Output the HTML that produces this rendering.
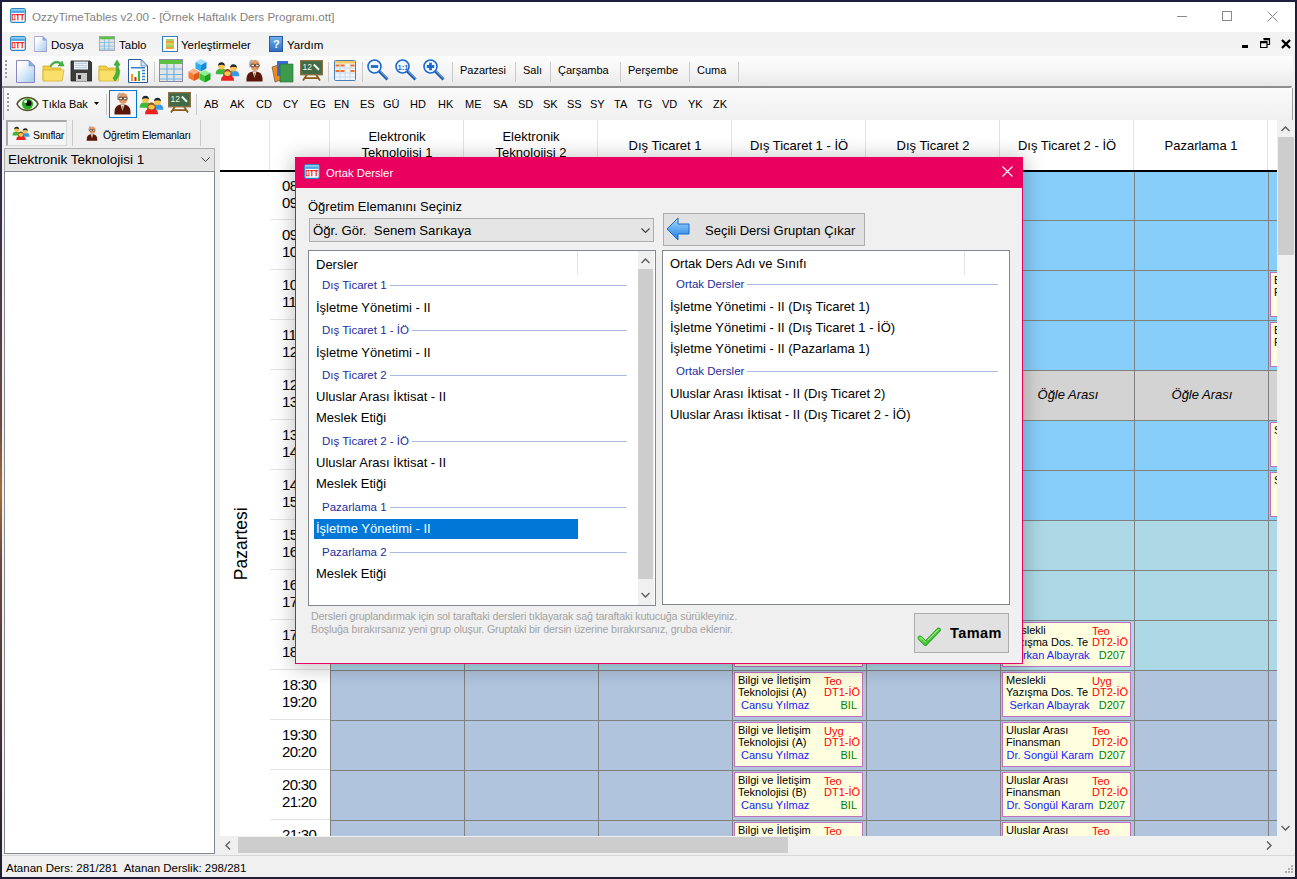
<!DOCTYPE html><html><head><meta charset="utf-8"><style>
*{margin:0;padding:0;box-sizing:border-box}
html,body{width:1297px;height:879px;overflow:hidden;background:#f0f0f0;font-family:"Liberation Sans",sans-serif;color:#000}
div,span,svg{position:absolute}
.sep{width:1px;background:#c9c9c9}
.grip{width:2px;background:repeating-linear-gradient(#9a9a9a 0 2px,transparent 2px 4px)}
.tx{white-space:nowrap;line-height:1}
</style></head><body>
<div style="left:0px;top:0px;width:1297px;height:32px;background:#fff"></div>
<svg style="position:absolute;left:10px;top:8px" width="16" height="15" viewBox="0 0 16 15"><rect x="0.7" y="0.7" width="14.6" height="13.6" rx="1.5" fill="#fff" stroke="#2a86c0" stroke-width="1.3"/><rect x="1.3" y="1.3" width="13.4" height="3.6" fill="#4aa6e0"/><rect x="1.3" y="1.3" width="13.4" height="1.3" fill="#9fd6f6"/><path d="M1.8 6h3.6v6.2H1.8z M2.8 7v4.2h1.6V7z" fill="#f02828" fill-rule="evenodd"/><path d="M5.8 6h4v1.3H8.45V12.2H7.15V7.3H5.8z M10 6h4.2v1.3h-1.4V12.2h-1.3V7.3H10z" fill="#f02828"/><path d="M2 8.6h12M2 10.4h12" stroke="#fff" stroke-width="0.35" stroke-dasharray="0.5 0.7"/></svg>
<span class="tx" style="left:32px;top:11px;font-size:11.6px;color:#828282;">OzzyTimeTables v2.00 - [Örnek Haftalık Ders Programı.ott]</span>
<div style="left:1177px;top:16px;width:10px;height:1px;background:#8a8a8a"></div>
<div style="left:1222px;top:11px;width:10px;height:10px;border:1px solid #8a8a8a"></div>
<svg style="left:1267px;top:11px" width="11" height="11"><path d="M0.5 0.5L10.5 10.5M10.5 0.5L0.5 10.5" stroke="#8a8a8a" stroke-width="1"/></svg>
<div style="left:0px;top:32px;width:1297px;height:24px;background:linear-gradient(#f1f1f1,#f4f4f4)"></div>
<svg style="position:absolute;left:10px;top:36px" width="16" height="15" viewBox="0 0 16 15"><rect x="0.7" y="0.7" width="14.6" height="13.6" rx="1.5" fill="#fff" stroke="#2a86c0" stroke-width="1.3"/><rect x="1.3" y="1.3" width="13.4" height="3.6" fill="#4aa6e0"/><rect x="1.3" y="1.3" width="13.4" height="1.3" fill="#9fd6f6"/><path d="M1.8 6h3.6v6.2H1.8z M2.8 7v4.2h1.6V7z" fill="#f02828" fill-rule="evenodd"/><path d="M5.8 6h4v1.3H8.45V12.2H7.15V7.3H5.8z M10 6h4.2v1.3h-1.4V12.2h-1.3V7.3H10z" fill="#f02828"/><path d="M2 8.6h12M2 10.4h12" stroke="#fff" stroke-width="0.35" stroke-dasharray="0.5 0.7"/></svg>
<svg style="position:absolute;left:34px;top:36px" width="13" height="16" viewBox="0 0 19 23"><defs><linearGradient id="ndg" x1="0" y1="0" x2="1" y2="1"><stop offset="0.2" stop-color="#ffffff"/><stop offset="1" stop-color="#9fcbef"/></linearGradient></defs><path d="M0.5 0.5H13L18.5 6V22.5H0.5Z" fill="url(#ndg)" stroke="#8a86c4"/><path d="M13 0.5V6H18.5Z" fill="#7ab8ea" stroke="#8a86c4" stroke-width="0.6"/></svg>
<span class="tx" style="left:51px;top:40px;font-size:11.5px;color:#000;">Dosya</span>
<svg style="position:absolute;left:99px;top:36px" width="16" height="15" viewBox="0 0 24 23"><rect x="0.5" y="0.5" width="23" height="22" fill="#e4e4e4" stroke="#8a8aa8"/><rect x="1" y="1" width="22" height="4" fill="#5cc040"/><path d="M8 5V22M15 5V22" stroke="#6ab4e4" stroke-width="1.2"/><path d="M1 10H23M1 15.5H23M1 20H23" stroke="#6ab4e4" stroke-width="1"/></svg>
<span class="tx" style="left:119px;top:40px;font-size:11.5px;color:#000;">Tablo</span>
<div style="left:162px;top:36px;width:16px;height:16px;border:1px solid #2f7fc0;background:#fff"><div style="left:3px;top:2px;width:8px;height:10px;background:repeating-linear-gradient(#9fd36a 0 2px,#f0a040 2px 4px,#d8d060 4px 6px)"></div></div>
<span class="tx" style="left:181px;top:40px;font-size:11.5px;color:#000;">Yerleştirmeler</span>
<div style="left:269px;top:36px;width:14px;height:16px;background:linear-gradient(#6fb0ef,#2f6fc0);border:1px solid #2a5a9a"><span class="tx" style="left:3px;top:2px;font-size:11px;color:#fff;font-weight:bold">?</span></div>
<span class="tx" style="left:287px;top:40px;font-size:11.5px;color:#000;">Yardım</span>
<div style="left:1242px;top:45px;width:6px;height:3px;background:#000"></div>
<svg style="left:1260px;top:38px" width="11" height="11"><path d="M3.5 0.5h6v6h-2.5M0.5 3.5h6.5v6H0.5z" fill="none" stroke="#000" stroke-width="1.2"/><path d="M3.5 0.5h6v1.8h-6z M0.5 3.5h6.5v1.8H0.5z" fill="#000"/></svg>
<svg style="left:1281px;top:39px" width="10" height="10"><path d="M1 1L9 9M9 1L1 9" stroke="#000" stroke-width="2.4"/></svg>
<div style="left:2px;top:56px;width:1291px;height:31px;background:linear-gradient(#fdfdfd,#f4f4f4 55%,#e8e8e8);border-bottom-right-radius:3px"></div>
<div style="left:2px;top:86px;width:1290px;height:2px;background:#8e8e8e;border-bottom-right-radius:2px"></div>
<div class="grip" style="left:5px;top:60px;width:2px;height:18px;"></div>
<svg style="position:absolute;left:16px;top:60px" width="19" height="23" viewBox="0 0 19 23"><defs><linearGradient id="ndg" x1="0" y1="0" x2="1" y2="1"><stop offset="0.2" stop-color="#ffffff"/><stop offset="1" stop-color="#9fcbef"/></linearGradient></defs><path d="M0.5 0.5H13L18.5 6V22.5H0.5Z" fill="url(#ndg)" stroke="#8a86c4"/><path d="M13 0.5V6H18.5Z" fill="#7ab8ea" stroke="#8a86c4" stroke-width="0.6"/></svg>
<svg style="position:absolute;left:42px;top:60px" width="23" height="22" viewBox="0 0 23 22"><path d="M1 6H8L10 8H19V20H1Z" fill="#f2d04a" stroke="#d2a820" stroke-width="0.8"/><path d="M1 10H22L20 21H1Z" fill="#f8e06a" stroke="#d8b030" stroke-width="0.8"/><path d="M8 6C10 1 16 0 19 3L20 1L22 6L16 6L18 4C15 2 11 3 9 7Z" fill="#3cb83c" stroke="#2a8a2a" stroke-width="0.5"/></svg>
<svg style="position:absolute;left:70px;top:60px" width="22" height="22" viewBox="0 0 22 22"><path d="M1 1H20L22 3V21H1Z" fill="#3c3c3c" stroke="#222" stroke-width="0.8"/><rect x="4" y="1.5" width="14" height="8" fill="#e8eef4"/><path d="M5 3.5H17M5 5.5H17M5 7.5H17" stroke="#b0c4d8" stroke-width="0.8"/><rect x="6" y="13" width="11" height="8" fill="#c8c8c8"/><rect x="8" y="15" width="3" height="4" fill="#333"/></svg>
<svg style="position:absolute;left:98px;top:60px" width="23" height="22" viewBox="0 0 23 22"><path d="M1 6H8L10 8H19V20H1Z" fill="#f2d04a" stroke="#d2a820" stroke-width="0.8"/><path d="M1 10H22L20 21H1Z" fill="#f8e06a" stroke="#d8b030" stroke-width="0.8"/><path d="M17 21C22 17 22 10 20 6L22 5L19 0L16 5L18 5.5C19 10 18 15 15 18Z" fill="#3cb83c" stroke="#2a8a2a" stroke-width="0.5"/></svg>
<svg style="position:absolute;left:128px;top:59px" width="20" height="24" viewBox="0 0 20 24"><path d="M0.5 0.5H13L19.5 7V23.5H0.5Z" fill="#fff" stroke="#2a5a9a"/><path d="M13 0.5V7H19.5Z" fill="#d8e4f0" stroke="#2a5a9a" stroke-width="0.6"/><rect x="3" y="8" width="14" height="1.5" fill="#2f7fd0"/><rect x="3" y="15" width="2" height="7" fill="#f0a020"/><rect x="6.5" y="18" width="2" height="4" fill="#e02020"/><rect x="10" y="12" width="2" height="10" fill="#30c030"/><path d="M14 11.5H17M14 14.5H17M14 17.5H17M14 20.5H17" stroke="#2f7fd0" stroke-width="1.5"/></svg>
<div class="sep" style="left:154px;top:62px;width:1px;height:20px;"></div>
<svg style="position:absolute;left:159px;top:59px" width="24" height="23" viewBox="0 0 24 23"><rect x="0.5" y="0.5" width="23" height="22" fill="#e4e4e4" stroke="#8a8aa8"/><rect x="1" y="1" width="22" height="4" fill="#5cc040"/><path d="M8 5V22M15 5V22" stroke="#6ab4e4" stroke-width="1.2"/><path d="M1 10H23M1 15.5H23M1 20H23" stroke="#6ab4e4" stroke-width="1"/></svg>
<svg style="position:absolute;left:188px;top:59px" width="23" height="24" viewBox="0 0 23 24"><path d="M7.5 3L13.0 0L18.5 3L13.0 6Z" fill="#9ee0ff"/><path d="M7.5 3L13.0 6V12.5L7.5 9.5Z" fill="#2fb0f0"/><path d="M18.5 3L13.0 6V12.5L18.5 9.5Z" fill="#1a8ad8"/><path d="M0.5 12.5L6.0 9.5L11.5 12.5L6.0 15.5Z" fill="#ffb080"/><path d="M0.5 12.5L6.0 15.5V22.0L0.5 19.0Z" fill="#f87a30"/><path d="M11.5 12.5L6.0 15.5V22.0L11.5 19.0Z" fill="#e05a18"/><path d="M11.5 14L17.0 11L22.5 14L17.0 17Z" fill="#90f090"/><path d="M11.5 14L17.0 17V23.5L11.5 20.5Z" fill="#3ac83a"/><path d="M22.5 14L17.0 17V23.5L22.5 20.5Z" fill="#1ea01e"/></svg>
<svg style="position:absolute;left:215px;top:60px" width="25" height="22" viewBox="0 0 25 21"><path d="M0.7000000000000002 13.8C0.7000000000000002 9.3 3.02 8.3 6.5 8.3C9.98 8.3 12.3 9.3 12.3 13.8Z" fill="#3cb83c"/><ellipse cx="6.5" cy="5.5" rx="3.3" ry="3.5999999999999996" fill="#fbc34a"/><path d="M3.0 5.3C3.2 0.7000000000000002 9.8 0.7000000000000002 10.0 5.3C7.49 3.8 5.51 3.8 3.0 5.3Z" fill="#18283a"/><path d="M12.7 15.8C12.7 11.3 15.02 10.3 18.5 10.3C21.98 10.3 24.3 11.3 24.3 15.8Z" fill="#3a98e8"/><ellipse cx="18.5" cy="7.5" rx="3.3" ry="3.5999999999999996" fill="#fbc34a"/><path d="M15.0 7.3C15.2 2.7 21.8 2.7 22.0 7.3C19.49 5.8 17.51 5.8 15.0 7.3Z" fill="#18283a"/><path d="M6.0 20.3C6.0 15.8 8.6 14.8 12.5 14.8C16.4 14.8 19.0 15.8 19.0 20.3Z" fill="#ea2222"/><path d="M8.2 15.8C7.699999999999999 7.199999999999999 17.3 7.199999999999999 16.8 15.8Z" fill="#9a4a20"/><ellipse cx="12.5" cy="12.0" rx="3.3" ry="3.5999999999999996" fill="#fbc34a"/><path d="M8.899999999999999 12.5C9.2 6.999999999999999 15.8 6.999999999999999 16.1 12.5C14.15 10.0 10.85 10.0 8.899999999999999 12.5Z" fill="#9a4a20"/></svg>
<svg style="position:absolute;left:246px;top:59px" width="17" height="23" viewBox="0 0 17 23"><path d="M0.5 22.5C0 15 3 12.5 8.5 12.5C14 12.5 17 15 16.5 22.5Z" fill="#5a1608"/><path d="M6.5 12.5L8.5 19L10.5 12.5Z" fill="#e8d8b0"/><path d="M8.2 14L8.5 19L8.8 14Z" fill="#333"/><ellipse cx="9" cy="6.3" rx="4.6" ry="5.6" fill="#e59a6a"/><path d="M4.2 8C3.5 4 4.5 1.5 6.5 1" fill="none" stroke="#a8a8a8" stroke-width="1.8"/><rect x="5" y="5.2" width="3.6" height="2.6" rx="0.8" fill="#f8f0e8" stroke="#4a2a1a" stroke-width="0.9"/><rect x="9.4" y="5.2" width="3.6" height="2.6" rx="0.8" fill="#f8f0e8" stroke="#4a2a1a" stroke-width="0.9"/></svg>
<svg style="position:absolute;left:271px;top:59px" width="24" height="24" viewBox="0 0 24 24"><path d="M1 8L7 6L10 21L4 23Z" fill="#f08a20" stroke="#333" stroke-width="0.5"/><path d="M6 2H17V17H6Z" fill="#3a6ad8"/><path d="M9 5H22V23H9Z" fill="#3c9a4a" stroke="#2a6a3a" stroke-width="0.6"/></svg>
<svg style="position:absolute;left:300px;top:60px" width="23" height="21" viewBox="0 0 23 21"><path d="M7 14.5L3 20.5M16 14.5L20 20.5M4.5 18.2H18.5" stroke="#8a5a18" stroke-width="1.8"/><rect x="0.7" y="0.7" width="21.6" height="14" fill="#3f6a45" stroke="#8a7040" stroke-width="1.4"/><text x="2.6" y="9.6" font-family="Liberation Sans" font-size="8.5" fill="#f4f4ec">12</text><path d="M13.8 4.5L19 9.8" stroke="#f4f4ec" stroke-width="2"/></svg>
<div class="sep" style="left:328px;top:62px;width:1px;height:20px;"></div>
<svg style="position:absolute;left:334px;top:60px" width="22" height="21" viewBox="0 0 22 21"><rect x="0.5" y="0.5" width="21" height="20" fill="#f0f6fc" stroke="#4a80b0" rx="1"/><rect x="1" y="1" width="20" height="2.5" fill="#f8c860"/><path d="M6 3V20M11 3V20M16 3V20M1 8H21M1 13H21M1 17H21" stroke="#c0d4e8" stroke-width="0.8"/><path d="M1.5 5.5H5.5M6.5 5.5H10.5M16.5 5.5H20.5M1.5 11H5.5M6.5 11H10.5M16.5 11H20.5" stroke="#f07020" stroke-width="2.2"/></svg>
<div class="sep" style="left:362px;top:62px;width:1px;height:20px;"></div>
<svg style="position:absolute;left:367px;top:59px" width="23" height="22" viewBox="0 0 23 22"><path d="M12 12L20.5 20.5" stroke="#1a5ab0" stroke-width="3"/><path d="M12.5 11.8L20.8 20" stroke="#8ac0f0" stroke-width="0.8"/><circle cx="7.5" cy="7.5" r="6.5" fill="#f4f8ff" stroke="#1a6ad0" stroke-width="1.6"/><path d="M3.8 7.5H11.2" stroke="#1a6ad0" stroke-width="2.8"/></svg>
<svg style="position:absolute;left:395px;top:59px" width="23" height="22" viewBox="0 0 23 22"><path d="M12 12L20.5 20.5" stroke="#1a5ab0" stroke-width="3"/><path d="M12.5 11.8L20.8 20" stroke="#8ac0f0" stroke-width="0.8"/><circle cx="7.5" cy="7.5" r="6.5" fill="#f4f8ff" stroke="#1a6ad0" stroke-width="1.6"/><text x="2.6" y="10.6" font-family="Liberation Sans" font-size="7.5" font-weight="bold" fill="#1a6ad0">1:1</text></svg>
<svg style="position:absolute;left:423px;top:59px" width="23" height="22" viewBox="0 0 23 22"><path d="M12 12L20.5 20.5" stroke="#1a5ab0" stroke-width="3"/><path d="M12.5 11.8L20.8 20" stroke="#8ac0f0" stroke-width="0.8"/><circle cx="7.5" cy="7.5" r="6.5" fill="#f4f8ff" stroke="#1a6ad0" stroke-width="1.6"/><path d="M3.8 7.5H11.2M7.5 3.8V11.2" stroke="#1a6ad0" stroke-width="2.8"/></svg>
<div class="sep" style="left:452px;top:62px;width:1px;height:20px;"></div>
<span class="tx" style="left:460px;top:65px;font-size:11px;color:#000;">Pazartesi</span>
<span class="tx" style="left:523px;top:65px;font-size:11px;color:#000;">Salı</span>
<span class="tx" style="left:558px;top:65px;font-size:11px;color:#000;">Çarşamba</span>
<span class="tx" style="left:628px;top:65px;font-size:11px;color:#000;">Perşembe</span>
<span class="tx" style="left:697px;top:65px;font-size:11px;color:#000;">Cuma</span>
<div class="sep" style="left:515px;top:62px;width:1px;height:20px;"></div>
<div class="sep" style="left:550px;top:62px;width:1px;height:20px;"></div>
<div class="sep" style="left:620px;top:62px;width:1px;height:20px;"></div>
<div class="sep" style="left:689px;top:62px;width:1px;height:20px;"></div>
<div class="sep" style="left:738px;top:62px;width:1px;height:20px;"></div>
<div style="left:3px;top:88px;width:1290px;height:32px;background:linear-gradient(#fbfbfb,#f0f0f0);border-left:1px solid #a0a0a0;border-right:1px solid #a0a0a0"></div>
<div class="grip" style="left:7px;top:93px;width:2px;height:18px;"></div>
<svg style="position:absolute;left:16px;top:96px" width="23" height="16" viewBox="0 0 23 16"><path d="M1 8C5 -0.5 18 -0.5 22 8C18 16.5 5 16.5 1 8Z" fill="#fff" stroke="#55552a" stroke-width="1.6"/><circle cx="11.5" cy="8" r="5.6" fill="#22b022"/><circle cx="12.6" cy="7.2" r="2.9" fill="#101010"/><circle cx="9.6" cy="5.6" r="1.5" fill="#f0fff0"/></svg>
<span class="tx" style="left:42px;top:99px;font-size:11px;color:#000;">Tıkla Bak</span>
<svg style="left:94px;top:102px" width="5" height="4"><path d="M0 0H5L2.5 3Z" fill="#000"/></svg>
<div class="sep" style="left:106px;top:94px;width:1px;height:21px;"></div>
<div style="left:109px;top:90px;width:28px;height:28px;border:1px solid #0078d7;background:#f6f6f6"></div>
<svg style="position:absolute;left:114px;top:92px" width="17" height="23" viewBox="0 0 17 23"><path d="M0.5 22.5C0 15 3 12.5 8.5 12.5C14 12.5 17 15 16.5 22.5Z" fill="#5a1608"/><path d="M6.5 12.5L8.5 19L10.5 12.5Z" fill="#e8d8b0"/><path d="M8.2 14L8.5 19L8.8 14Z" fill="#333"/><ellipse cx="9" cy="6.3" rx="4.6" ry="5.6" fill="#e59a6a"/><path d="M4.2 8C3.5 4 4.5 1.5 6.5 1" fill="none" stroke="#a8a8a8" stroke-width="1.8"/><rect x="5" y="5.2" width="3.6" height="2.6" rx="0.8" fill="#f8f0e8" stroke="#4a2a1a" stroke-width="0.9"/><rect x="9.4" y="5.2" width="3.6" height="2.6" rx="0.8" fill="#f8f0e8" stroke="#4a2a1a" stroke-width="0.9"/></svg>
<svg style="position:absolute;left:139px;top:94px" width="25" height="21" viewBox="0 0 25 21"><path d="M0.7000000000000002 13.8C0.7000000000000002 9.3 3.02 8.3 6.5 8.3C9.98 8.3 12.3 9.3 12.3 13.8Z" fill="#3cb83c"/><ellipse cx="6.5" cy="5.5" rx="3.3" ry="3.5999999999999996" fill="#fbc34a"/><path d="M3.0 5.3C3.2 0.7000000000000002 9.8 0.7000000000000002 10.0 5.3C7.49 3.8 5.51 3.8 3.0 5.3Z" fill="#18283a"/><path d="M12.7 15.8C12.7 11.3 15.02 10.3 18.5 10.3C21.98 10.3 24.3 11.3 24.3 15.8Z" fill="#3a98e8"/><ellipse cx="18.5" cy="7.5" rx="3.3" ry="3.5999999999999996" fill="#fbc34a"/><path d="M15.0 7.3C15.2 2.7 21.8 2.7 22.0 7.3C19.49 5.8 17.51 5.8 15.0 7.3Z" fill="#18283a"/><path d="M6.0 20.3C6.0 15.8 8.6 14.8 12.5 14.8C16.4 14.8 19.0 15.8 19.0 20.3Z" fill="#ea2222"/><path d="M8.2 15.8C7.699999999999999 7.199999999999999 17.3 7.199999999999999 16.8 15.8Z" fill="#9a4a20"/><ellipse cx="12.5" cy="12.0" rx="3.3" ry="3.5999999999999996" fill="#fbc34a"/><path d="M8.899999999999999 12.5C9.2 6.999999999999999 15.8 6.999999999999999 16.1 12.5C14.15 10.0 10.85 10.0 8.899999999999999 12.5Z" fill="#9a4a20"/></svg>
<svg style="position:absolute;left:168px;top:92px" width="23" height="21" viewBox="0 0 23 21"><path d="M7 14.5L3 20.5M16 14.5L20 20.5M4.5 18.2H18.5" stroke="#8a5a18" stroke-width="1.8"/><rect x="0.7" y="0.7" width="21.6" height="14" fill="#3f6a45" stroke="#8a7040" stroke-width="1.4"/><text x="2.6" y="9.6" font-family="Liberation Sans" font-size="8.5" fill="#f4f4ec">12</text><path d="M13.8 4.5L19 9.8" stroke="#f4f4ec" stroke-width="2"/></svg>
<div class="sep" style="left:196px;top:94px;width:1px;height:21px;"></div>
<span class="tx" style="left:204px;top:99px;font-size:11px;color:#000;">AB</span>
<span class="tx" style="left:230px;top:99px;font-size:11px;color:#000;">AK</span>
<span class="tx" style="left:256px;top:99px;font-size:11px;color:#000;">CD</span>
<span class="tx" style="left:283px;top:99px;font-size:11px;color:#000;">CY</span>
<span class="tx" style="left:310px;top:99px;font-size:11px;color:#000;">EG</span>
<span class="tx" style="left:334px;top:99px;font-size:11px;color:#000;">EN</span>
<span class="tx" style="left:360px;top:99px;font-size:11px;color:#000;">ES</span>
<span class="tx" style="left:383px;top:99px;font-size:11px;color:#000;">GÜ</span>
<span class="tx" style="left:410px;top:99px;font-size:11px;color:#000;">HD</span>
<span class="tx" style="left:438px;top:99px;font-size:11px;color:#000;">HK</span>
<span class="tx" style="left:465px;top:99px;font-size:11px;color:#000;">ME</span>
<span class="tx" style="left:493px;top:99px;font-size:11px;color:#000;">SA</span>
<span class="tx" style="left:518px;top:99px;font-size:11px;color:#000;">SD</span>
<span class="tx" style="left:543px;top:99px;font-size:11px;color:#000;">SK</span>
<span class="tx" style="left:567px;top:99px;font-size:11px;color:#000;">SS</span>
<span class="tx" style="left:590px;top:99px;font-size:11px;color:#000;">SY</span>
<span class="tx" style="left:614px;top:99px;font-size:11px;color:#000;">TA</span>
<span class="tx" style="left:637px;top:99px;font-size:11px;color:#000;">TG</span>
<span class="tx" style="left:662px;top:99px;font-size:11px;color:#000;">VD</span>
<span class="tx" style="left:688px;top:99px;font-size:11px;color:#000;">YK</span>
<span class="tx" style="left:713px;top:99px;font-size:11px;color:#000;">ZK</span>
<div style="left:6px;top:120px;width:61px;height:26px;border-style:solid;border-width:2px 1px 1px 2px;border-color:#a8a8a8 #d8d8d8 #d8d8d8 #a8a8a8;background:#f5f5f5"></div>
<svg style="position:absolute;left:12px;top:125px" width="18" height="16" viewBox="0 0 25 21"><path d="M0.7000000000000002 13.8C0.7000000000000002 9.3 3.02 8.3 6.5 8.3C9.98 8.3 12.3 9.3 12.3 13.8Z" fill="#3cb83c"/><ellipse cx="6.5" cy="5.5" rx="3.3" ry="3.5999999999999996" fill="#fbc34a"/><path d="M3.0 5.3C3.2 0.7000000000000002 9.8 0.7000000000000002 10.0 5.3C7.49 3.8 5.51 3.8 3.0 5.3Z" fill="#18283a"/><path d="M12.7 15.8C12.7 11.3 15.02 10.3 18.5 10.3C21.98 10.3 24.3 11.3 24.3 15.8Z" fill="#3a98e8"/><ellipse cx="18.5" cy="7.5" rx="3.3" ry="3.5999999999999996" fill="#fbc34a"/><path d="M15.0 7.3C15.2 2.7 21.8 2.7 22.0 7.3C19.49 5.8 17.51 5.8 15.0 7.3Z" fill="#18283a"/><path d="M6.0 20.3C6.0 15.8 8.6 14.8 12.5 14.8C16.4 14.8 19.0 15.8 19.0 20.3Z" fill="#ea2222"/><path d="M8.2 15.8C7.699999999999999 7.199999999999999 17.3 7.199999999999999 16.8 15.8Z" fill="#9a4a20"/><ellipse cx="12.5" cy="12.0" rx="3.3" ry="3.5999999999999996" fill="#fbc34a"/><path d="M8.899999999999999 12.5C9.2 6.999999999999999 15.8 6.999999999999999 16.1 12.5C14.15 10.0 10.85 10.0 8.899999999999999 12.5Z" fill="#9a4a20"/></svg>
<span class="tx" style="left:33px;top:130px;font-size:10.5px;color:#000;letter-spacing:-0.3px">Sınıflar</span>
<div class="sep" style="left:72px;top:120px;width:1px;height:26px;"></div>
<svg style="position:absolute;left:86px;top:126px" width="12" height="15" viewBox="0 0 17 23"><path d="M0.5 22.5C0 15 3 12.5 8.5 12.5C14 12.5 17 15 16.5 22.5Z" fill="#5a1608"/><path d="M6.5 12.5L8.5 19L10.5 12.5Z" fill="#e8d8b0"/><path d="M8.2 14L8.5 19L8.8 14Z" fill="#333"/><ellipse cx="9" cy="6.3" rx="4.6" ry="5.6" fill="#e59a6a"/><path d="M4.2 8C3.5 4 4.5 1.5 6.5 1" fill="none" stroke="#a8a8a8" stroke-width="1.8"/><rect x="5" y="5.2" width="3.6" height="2.6" rx="0.8" fill="#f8f0e8" stroke="#4a2a1a" stroke-width="0.9"/><rect x="9.4" y="5.2" width="3.6" height="2.6" rx="0.8" fill="#f8f0e8" stroke="#4a2a1a" stroke-width="0.9"/></svg>
<span class="tx" style="left:103px;top:130px;font-size:10.5px;color:#000;letter-spacing:-0.15px">Öğretim Elemanları</span>
<div class="sep" style="left:200px;top:120px;width:1px;height:26px;"></div>
<div style="left:4px;top:148px;width:211px;height:24px;background:#e5e5e5;border:1px solid #adadad"></div>
<span class="tx" style="left:8px;top:153px;font-size:13.5px;color:#000;">Elektronik Teknolojisi 1</span>
<svg style="left:201px;top:157px" width="10" height="6"><path d="M0.5 0.5L4.5 4.5L8.5 0.5" fill="none" stroke="#404040" stroke-width="1"/></svg>
<div style="left:4px;top:171px;width:211px;height:683px;background:#fff;border:1px solid #828790"></div>
<div style="left:220px;top:120px;width:1057px;height:716px;background:#fff;overflow:hidden"></div>
<div style="left:0;top:0;width:1277px;height:837px;overflow:hidden">
<div style="left:269px;top:120px;width:1px;height:50px;background:#e3e3e3"></div>
<div style="left:463px;top:120px;width:1px;height:50px;background:#e3e3e3"></div>
<div style="left:597px;top:120px;width:1px;height:50px;background:#e3e3e3"></div>
<div style="left:731px;top:120px;width:1px;height:50px;background:#e3e3e3"></div>
<div style="left:865px;top:120px;width:1px;height:50px;background:#e3e3e3"></div>
<div style="left:999px;top:120px;width:1px;height:50px;background:#e3e3e3"></div>
<div style="left:1133px;top:120px;width:1px;height:50px;background:#e3e3e3"></div>
<div style="left:1267px;top:120px;width:1px;height:50px;background:#e3e3e3"></div>
<div style="left:329px;top:120px;width:1px;height:50px;background:#e3e3e3"></div>
<span class="tx" style="left:197px;width:400px;text-align:center;top:130px;font-size:13px;color:#000;">Elektronik</span>
<span class="tx" style="left:197px;width:400px;text-align:center;top:146px;font-size:13px;color:#000;">Teknolojisi 1</span>
<span class="tx" style="left:331px;width:400px;text-align:center;top:130px;font-size:13px;color:#000;">Elektronik</span>
<span class="tx" style="left:331px;width:400px;text-align:center;top:146px;font-size:13px;color:#000;">Teknolojisi 2</span>
<span class="tx" style="left:465px;width:400px;text-align:center;top:139px;font-size:13px;color:#000;">Dış Ticaret 1</span>
<span class="tx" style="left:599px;width:400px;text-align:center;top:139px;font-size:13px;color:#000;">Dış Ticaret 1 - İÖ</span>
<span class="tx" style="left:733px;width:400px;text-align:center;top:139px;font-size:13px;color:#000;">Dış Ticaret 2</span>
<span class="tx" style="left:867px;width:400px;text-align:center;top:139px;font-size:13px;color:#000;">Dış Ticaret 2 - İÖ</span>
<span class="tx" style="left:1001px;width:400px;text-align:center;top:139px;font-size:13px;color:#000;">Pazarlama 1</span>
<span class="tx" style="left:1135px;width:400px;text-align:center;top:139px;font-size:13px;color:#000;"></span>
<div style="left:220px;top:170px;width:1057px;height:2px;background:#000"></div>
<div style="left:330px;top:172px;width:947px;height:48px;background:#87cefa"></div>
<span class="tx" style="left:282px;top:178px;font-size:15px;color:#000;letter-spacing:-0.7px">08:30</span>
<span class="tx" style="left:282px;top:195px;font-size:15px;color:#000;letter-spacing:-0.7px">09:20</span>
<div style="left:330px;top:220px;width:947px;height:50px;background:#87cefa"></div>
<div style="left:270px;top:219px;width:60px;height:1px;background:#e3e3e3"></div>
<div style="left:330px;top:220px;width:947px;height:1px;background:#808080"></div>
<span class="tx" style="left:282px;top:227px;font-size:15px;color:#000;letter-spacing:-0.7px">09:30</span>
<span class="tx" style="left:282px;top:244px;font-size:15px;color:#000;letter-spacing:-0.7px">10:20</span>
<div style="left:330px;top:270px;width:947px;height:50px;background:#87cefa"></div>
<div style="left:270px;top:269px;width:60px;height:1px;background:#e3e3e3"></div>
<div style="left:330px;top:270px;width:947px;height:1px;background:#808080"></div>
<span class="tx" style="left:282px;top:277px;font-size:15px;color:#000;letter-spacing:-0.7px">10:30</span>
<span class="tx" style="left:282px;top:294px;font-size:15px;color:#000;letter-spacing:-0.7px">11:20</span>
<div style="left:330px;top:320px;width:947px;height:50px;background:#87cefa"></div>
<div style="left:270px;top:319px;width:60px;height:1px;background:#e3e3e3"></div>
<div style="left:330px;top:320px;width:947px;height:1px;background:#808080"></div>
<span class="tx" style="left:282px;top:327px;font-size:15px;color:#000;letter-spacing:-0.7px">11:30</span>
<span class="tx" style="left:282px;top:344px;font-size:15px;color:#000;letter-spacing:-0.7px">12:20</span>
<div style="left:330px;top:370px;width:947px;height:50px;background:#d3d3d3"></div>
<div style="left:270px;top:369px;width:60px;height:1px;background:#e3e3e3"></div>
<div style="left:330px;top:370px;width:947px;height:1px;background:#808080"></div>
<span class="tx" style="left:282px;top:377px;font-size:15px;color:#000;letter-spacing:-0.7px">12:30</span>
<span class="tx" style="left:282px;top:394px;font-size:15px;color:#000;letter-spacing:-0.7px">13:20</span>
<div style="left:330px;top:420px;width:947px;height:50px;background:#87cefa"></div>
<div style="left:270px;top:419px;width:60px;height:1px;background:#e3e3e3"></div>
<div style="left:330px;top:420px;width:947px;height:1px;background:#808080"></div>
<span class="tx" style="left:282px;top:427px;font-size:15px;color:#000;letter-spacing:-0.7px">13:30</span>
<span class="tx" style="left:282px;top:444px;font-size:15px;color:#000;letter-spacing:-0.7px">14:20</span>
<div style="left:330px;top:470px;width:947px;height:50px;background:#87cefa"></div>
<div style="left:270px;top:469px;width:60px;height:1px;background:#e3e3e3"></div>
<div style="left:330px;top:470px;width:947px;height:1px;background:#808080"></div>
<span class="tx" style="left:282px;top:477px;font-size:15px;color:#000;letter-spacing:-0.7px">14:30</span>
<span class="tx" style="left:282px;top:494px;font-size:15px;color:#000;letter-spacing:-0.7px">15:20</span>
<div style="left:330px;top:520px;width:947px;height:50px;background:#add8e6"></div>
<div style="left:270px;top:519px;width:60px;height:1px;background:#e3e3e3"></div>
<div style="left:330px;top:520px;width:947px;height:1px;background:#808080"></div>
<span class="tx" style="left:282px;top:527px;font-size:15px;color:#000;letter-spacing:-0.7px">15:30</span>
<span class="tx" style="left:282px;top:544px;font-size:15px;color:#000;letter-spacing:-0.7px">16:20</span>
<div style="left:330px;top:570px;width:947px;height:50px;background:#add8e6"></div>
<div style="left:270px;top:569px;width:60px;height:1px;background:#e3e3e3"></div>
<div style="left:330px;top:570px;width:947px;height:1px;background:#808080"></div>
<span class="tx" style="left:282px;top:577px;font-size:15px;color:#000;letter-spacing:-0.7px">16:30</span>
<span class="tx" style="left:282px;top:594px;font-size:15px;color:#000;letter-spacing:-0.7px">17:20</span>
<div style="left:330px;top:620px;width:947px;height:50px;background:#add8e6"></div>
<div style="left:270px;top:619px;width:60px;height:1px;background:#e3e3e3"></div>
<div style="left:330px;top:620px;width:947px;height:1px;background:#808080"></div>
<span class="tx" style="left:282px;top:627px;font-size:15px;color:#000;letter-spacing:-0.7px">17:30</span>
<span class="tx" style="left:282px;top:644px;font-size:15px;color:#000;letter-spacing:-0.7px">18:20</span>
<div style="left:330px;top:670px;width:947px;height:50px;background:#b0c4de"></div>
<div style="left:270px;top:669px;width:60px;height:1px;background:#e3e3e3"></div>
<div style="left:330px;top:670px;width:947px;height:1px;background:#808080"></div>
<span class="tx" style="left:282px;top:677px;font-size:15px;color:#000;letter-spacing:-0.7px">18:30</span>
<span class="tx" style="left:282px;top:694px;font-size:15px;color:#000;letter-spacing:-0.7px">19:20</span>
<div style="left:330px;top:720px;width:947px;height:50px;background:#b0c4de"></div>
<div style="left:270px;top:719px;width:60px;height:1px;background:#e3e3e3"></div>
<div style="left:330px;top:720px;width:947px;height:1px;background:#808080"></div>
<span class="tx" style="left:282px;top:727px;font-size:15px;color:#000;letter-spacing:-0.7px">19:30</span>
<span class="tx" style="left:282px;top:744px;font-size:15px;color:#000;letter-spacing:-0.7px">20:20</span>
<div style="left:330px;top:770px;width:947px;height:50px;background:#b0c4de"></div>
<div style="left:270px;top:769px;width:60px;height:1px;background:#e3e3e3"></div>
<div style="left:330px;top:770px;width:947px;height:1px;background:#808080"></div>
<span class="tx" style="left:282px;top:777px;font-size:15px;color:#000;letter-spacing:-0.7px">20:30</span>
<span class="tx" style="left:282px;top:794px;font-size:15px;color:#000;letter-spacing:-0.7px">21:20</span>
<div style="left:330px;top:820px;width:947px;height:16px;background:#b0c4de"></div>
<div style="left:270px;top:819px;width:60px;height:1px;background:#e3e3e3"></div>
<div style="left:330px;top:820px;width:947px;height:1px;background:#808080"></div>
<span class="tx" style="left:282px;top:827px;font-size:15px;color:#000;letter-spacing:-0.7px">21:30</span>
<span class="tx" style="left:282px;top:844px;font-size:15px;color:#000;letter-spacing:-0.7px">22:20</span>
<div style="left:330px;top:172px;width:1px;height:664px;background:#808080"></div>
<div style="left:464px;top:172px;width:1px;height:664px;background:#808080"></div>
<div style="left:598px;top:172px;width:1px;height:664px;background:#808080"></div>
<div style="left:732px;top:172px;width:1px;height:664px;background:#808080"></div>
<div style="left:866px;top:172px;width:1px;height:664px;background:#808080"></div>
<div style="left:1000px;top:172px;width:1px;height:664px;background:#808080"></div>
<div style="left:1134px;top:172px;width:1px;height:664px;background:#808080"></div>
<div style="left:1268px;top:172px;width:1px;height:664px;background:#808080"></div>
<span class="tx" style="left:198px;width:400px;text-align:center;top:388px;font-size:13px;color:#000;font-style:italic">Öğle Arası</span>
<span class="tx" style="left:332px;width:400px;text-align:center;top:388px;font-size:13px;color:#000;font-style:italic">Öğle Arası</span>
<span class="tx" style="left:466px;width:400px;text-align:center;top:388px;font-size:13px;color:#000;font-style:italic">Öğle Arası</span>
<span class="tx" style="left:600px;width:400px;text-align:center;top:388px;font-size:13px;color:#000;font-style:italic">Öğle Arası</span>
<span class="tx" style="left:734px;width:400px;text-align:center;top:388px;font-size:13px;color:#000;font-style:italic">Öğle Arası</span>
<span class="tx" style="left:868px;width:400px;text-align:center;top:388px;font-size:13px;color:#000;font-style:italic">Öğle Arası</span>
<span class="tx" style="left:1002px;width:400px;text-align:center;top:388px;font-size:13px;color:#000;font-style:italic">Öğle Arası</span>
<span class="tx" style="left:1136px;width:400px;text-align:center;top:388px;font-size:13px;color:#000;font-style:italic">Öğle Arası</span>
<span class="tx" style="left:192px;top:535px;width:100px;text-align:center;font-size:17.5px;transform:rotate(-90deg)">Pazartesi</span>
<div style="left:734px;top:622px;width:129px;height:45px;background:#ffffe0;border:1px solid #c070c0;overflow:hidden"><span class="tx" style="left:3px;top:2px;font-size:11px">Bilgi ve İletişim</span><span class="tx" style="left:3px;top:14px;font-size:11px">Teknolojisi (A)</span><span class="tx" style="left:6px;top:27px;font-size:11px;color:#2020ff">Cansu Yılmaz</span><span class="tx" style="left:89px;top:3px;font-size:11px;color:#ff0000">Teo</span><span class="tx" style="left:89px;top:14px;font-size:11px;color:#ff0000">DT1-İÖ</span><span class="tx" style="right:5px;top:27px;font-size:11px;color:#008000">BIL</span></div>
<div style="left:734px;top:672px;width:129px;height:45px;background:#ffffe0;border:1px solid #c070c0;overflow:hidden"><span class="tx" style="left:3px;top:2px;font-size:11px">Bilgi ve İletişim</span><span class="tx" style="left:3px;top:14px;font-size:11px">Teknolojisi (A)</span><span class="tx" style="left:6px;top:27px;font-size:11px;color:#2020ff">Cansu Yılmaz</span><span class="tx" style="left:89px;top:3px;font-size:11px;color:#ff0000">Teo</span><span class="tx" style="left:89px;top:14px;font-size:11px;color:#ff0000">DT1-İÖ</span><span class="tx" style="right:5px;top:27px;font-size:11px;color:#008000">BIL</span></div>
<div style="left:734px;top:722px;width:129px;height:45px;background:#ffffe0;border:1px solid #c070c0;overflow:hidden"><span class="tx" style="left:3px;top:2px;font-size:11px">Bilgi ve İletişim</span><span class="tx" style="left:3px;top:14px;font-size:11px">Teknolojisi (A)</span><span class="tx" style="left:6px;top:27px;font-size:11px;color:#2020ff">Cansu Yılmaz</span><span class="tx" style="left:89px;top:3px;font-size:11px;color:#ff0000">Uyg</span><span class="tx" style="left:89px;top:14px;font-size:11px;color:#ff0000">DT1-İÖ</span><span class="tx" style="right:5px;top:27px;font-size:11px;color:#008000">BIL</span></div>
<div style="left:734px;top:772px;width:129px;height:45px;background:#ffffe0;border:1px solid #c070c0;overflow:hidden"><span class="tx" style="left:3px;top:2px;font-size:11px">Bilgi ve İletişim</span><span class="tx" style="left:3px;top:14px;font-size:11px">Teknolojisi (B)</span><span class="tx" style="left:6px;top:27px;font-size:11px;color:#2020ff">Cansu Yılmaz</span><span class="tx" style="left:89px;top:3px;font-size:11px;color:#ff0000">Teo</span><span class="tx" style="left:89px;top:14px;font-size:11px;color:#ff0000">DT1-İÖ</span><span class="tx" style="right:5px;top:27px;font-size:11px;color:#008000">BIL</span></div>
<div style="left:734px;top:822px;width:129px;height:45px;background:#ffffe0;border:1px solid #c070c0;overflow:hidden"><span class="tx" style="left:3px;top:2px;font-size:11px">Bilgi ve İletişim</span><span class="tx" style="left:3px;top:14px;font-size:11px">Teknolojisi (B)</span><span class="tx" style="left:6px;top:27px;font-size:11px;color:#2020ff">Cansu Yılmaz</span><span class="tx" style="left:89px;top:3px;font-size:11px;color:#ff0000">Teo</span><span class="tx" style="left:89px;top:14px;font-size:11px;color:#ff0000">DT1-İÖ</span><span class="tx" style="right:5px;top:27px;font-size:11px;color:#008000">BIL</span></div>
<div style="left:1002px;top:622px;width:129px;height:45px;background:#ffffe0;border:1px solid #c070c0;overflow:hidden"><span class="tx" style="left:3px;top:2px;font-size:11px">Meslekli</span><span class="tx" style="left:3px;top:14px;font-size:11px">Yazışma Dos. Te</span><span class="tx" style="left:6.5px;top:27px;font-size:11px;color:#2020ff">Serkan Albayrak</span><span class="tx" style="left:89px;top:3px;font-size:11px;color:#ff0000">Teo</span><span class="tx" style="left:89px;top:14px;font-size:11px;color:#ff0000">DT2-İÖ</span><span class="tx" style="right:5px;top:27px;font-size:11px;color:#008000">D207</span></div>
<div style="left:1002px;top:672px;width:129px;height:45px;background:#ffffe0;border:1px solid #c070c0;overflow:hidden"><span class="tx" style="left:3px;top:2px;font-size:11px">Meslekli</span><span class="tx" style="left:3px;top:14px;font-size:11px">Yazışma Dos. Te</span><span class="tx" style="left:6.5px;top:27px;font-size:11px;color:#2020ff">Serkan Albayrak</span><span class="tx" style="left:89px;top:3px;font-size:11px;color:#ff0000">Uyg</span><span class="tx" style="left:89px;top:14px;font-size:11px;color:#ff0000">DT2-İÖ</span><span class="tx" style="right:5px;top:27px;font-size:11px;color:#008000">D207</span></div>
<div style="left:1002px;top:722px;width:129px;height:45px;background:#ffffe0;border:1px solid #c070c0;overflow:hidden"><span class="tx" style="left:3px;top:2px;font-size:11px">Uluslar Arası</span><span class="tx" style="left:3px;top:14px;font-size:11px">Finansman</span><span class="tx" style="left:3.5px;top:27px;font-size:11px;color:#2020ff">Dr. Songül Karam</span><span class="tx" style="left:89px;top:3px;font-size:11px;color:#ff0000">Teo</span><span class="tx" style="left:89px;top:14px;font-size:11px;color:#ff0000">DT2-İÖ</span><span class="tx" style="right:5px;top:27px;font-size:11px;color:#008000">D207</span></div>
<div style="left:1002px;top:772px;width:129px;height:45px;background:#ffffe0;border:1px solid #c070c0;overflow:hidden"><span class="tx" style="left:3px;top:2px;font-size:11px">Uluslar Arası</span><span class="tx" style="left:3px;top:14px;font-size:11px">Finansman</span><span class="tx" style="left:3.5px;top:27px;font-size:11px;color:#2020ff">Dr. Songül Karam</span><span class="tx" style="left:89px;top:3px;font-size:11px;color:#ff0000">Teo</span><span class="tx" style="left:89px;top:14px;font-size:11px;color:#ff0000">DT2-İÖ</span><span class="tx" style="right:5px;top:27px;font-size:11px;color:#008000">D207</span></div>
<div style="left:1002px;top:822px;width:129px;height:45px;background:#ffffe0;border:1px solid #c070c0;overflow:hidden"><span class="tx" style="left:3px;top:2px;font-size:11px">Uluslar Arası</span><span class="tx" style="left:3px;top:14px;font-size:11px">Finansman</span><span class="tx" style="left:3.5px;top:27px;font-size:11px;color:#2020ff">Dr. Songül Karam</span><span class="tx" style="left:89px;top:3px;font-size:11px;color:#ff0000">Teo</span><span class="tx" style="left:89px;top:14px;font-size:11px;color:#ff0000">DT2-İÖ</span><span class="tx" style="right:5px;top:27px;font-size:11px;color:#008000">D207</span></div>
<div style="left:1270px;top:272px;width:129px;height:45px;background:#ffffe0;border:1px solid #c070c0;overflow:hidden"><span class="tx" style="left:3px;top:2px;font-size:11px">Bilgi</span><span class="tx" style="left:3px;top:14px;font-size:11px">Finans</span><span class="tx" style="left:6px;top:27px;font-size:11px;color:#2020ff"><span style='position:static;color:#e080e0'>·</span></span><span class="tx" style="left:89px;top:3px;font-size:11px;color:#ff0000"></span><span class="tx" style="left:89px;top:14px;font-size:11px;color:#ff0000"></span><span class="tx" style="right:5px;top:27px;font-size:11px;color:#008000"></span></div>
<div style="left:1270px;top:322px;width:129px;height:45px;background:#ffffe0;border:1px solid #c070c0;overflow:hidden"><span class="tx" style="left:3px;top:2px;font-size:11px">Bilgi</span><span class="tx" style="left:3px;top:14px;font-size:11px">Finans</span><span class="tx" style="left:6px;top:27px;font-size:11px;color:#2020ff"><span style='position:static;color:#e080e0'>·</span></span><span class="tx" style="left:89px;top:3px;font-size:11px;color:#ff0000"></span><span class="tx" style="left:89px;top:14px;font-size:11px;color:#ff0000"></span><span class="tx" style="right:5px;top:27px;font-size:11px;color:#008000"></span></div>
<div style="left:1270px;top:422px;width:129px;height:45px;background:#ffffe0;border:1px solid #c070c0;overflow:hidden"><span class="tx" style="left:3px;top:2px;font-size:11px">Satış</span><span class="tx" style="left:3px;top:14px;font-size:11px"></span><span class="tx" style="left:6px;top:27px;font-size:11px;color:#2020ff">-</span><span class="tx" style="left:89px;top:3px;font-size:11px;color:#ff0000"></span><span class="tx" style="left:89px;top:14px;font-size:11px;color:#ff0000"></span><span class="tx" style="right:5px;top:27px;font-size:11px;color:#008000"></span></div>
<div style="left:1270px;top:472px;width:129px;height:45px;background:#ffffe0;border:1px solid #c070c0;overflow:hidden"><span class="tx" style="left:3px;top:2px;font-size:11px">Satış</span><span class="tx" style="left:3px;top:14px;font-size:11px"></span><span class="tx" style="left:6px;top:27px;font-size:11px;color:#2020ff">-</span><span class="tx" style="left:89px;top:3px;font-size:11px;color:#ff0000"></span><span class="tx" style="left:89px;top:14px;font-size:11px;color:#ff0000"></span><span class="tx" style="right:5px;top:27px;font-size:11px;color:#008000"></span></div>
</div>
<div style="left:220px;top:836px;width:1057px;height:17px;background:#f0f0f0"></div>
<div style="left:238px;top:837px;width:550px;height:16px;background:#cdcdcd"></div>
<svg style="left:225px;top:841px" width="6" height="9"><path d="M5 0.5L1 4.5L5 8.5" fill="none" stroke="#606060" stroke-width="1.5"/></svg>
<svg style="left:1266px;top:841px" width="6" height="9"><path d="M1 0.5L5 4.5L1 8.5" fill="none" stroke="#606060" stroke-width="1.5"/></svg>
<div style="left:1277px;top:120px;width:18px;height:716px;background:#f0f0f0"></div>
<div style="left:1278px;top:137px;width:16px;height:118px;background:#cdcdcd"></div>
<svg style="left:1281px;top:126px" width="9" height="6"><path d="M0.5 5L4.5 1L8.5 5" fill="none" stroke="#606060" stroke-width="1.5"/></svg>
<svg style="left:1281px;top:825px" width="9" height="6"><path d="M0.5 1L4.5 5L8.5 1" fill="none" stroke="#606060" stroke-width="1.5"/></svg>
<div style="left:216px;top:120px;width:4px;height:736px;background:#f0f0f0"></div>
<div style="left:0px;top:855px;width:1297px;height:24px;background:#f0f0f0;border-top:1px solid #d7d7d7"></div>
<span class="tx" style="left:6px;top:863px;font-size:11.5px;color:#000;">Atanan Ders: 281/281&nbsp; Atanan Derslik: 298/281</span>
<div style="left:1291px;top:865px;width:2px;height:2px;background:#b0b0b0"></div>
<div style="left:1288px;top:868px;width:2px;height:2px;background:#b0b0b0"></div>
<div style="left:1291px;top:868px;width:2px;height:2px;background:#b0b0b0"></div>
<div style="left:1285px;top:871px;width:2px;height:2px;background:#b0b0b0"></div>
<div style="left:1288px;top:871px;width:2px;height:2px;background:#b0b0b0"></div>
<div style="left:1291px;top:871px;width:2px;height:2px;background:#b0b0b0"></div>
<div style="left:295px;top:157px;width:728px;height:507px;background:#f0f0f0;border:1px solid #ea005e;box-shadow:0 2px 18px 3px rgba(0,0,0,0.22);z-index:10">
<div style="left:-1px;top:-1px;width:728px;height:31px;background:#ea005e"></div>
<svg style="position:absolute;left:8px;top:6px" width="16" height="15" viewBox="0 0 16 15"><rect x="0.7" y="0.7" width="14.6" height="13.6" rx="1.5" fill="#fff" stroke="#2a86c0" stroke-width="1.3"/><rect x="1.3" y="1.3" width="13.4" height="3.6" fill="#4aa6e0"/><rect x="1.3" y="1.3" width="13.4" height="1.3" fill="#9fd6f6"/><path d="M1.8 6h3.6v6.2H1.8z M2.8 7v4.2h1.6V7z" fill="#f02828" fill-rule="evenodd"/><path d="M5.8 6h4v1.3H8.45V12.2H7.15V7.3H5.8z M10 6h4.2v1.3h-1.4V12.2h-1.3V7.3H10z" fill="#f02828"/><path d="M2 8.6h12M2 10.4h12" stroke="#fff" stroke-width="0.35" stroke-dasharray="0.5 0.7"/></svg>
<span class="tx" style="left:30px;top:10px;font-size:11.3px;color:#fff">Ortak Dersler</span>
<svg style="left:706px;top:8px" width="11" height="11"><path d="M0.5 0.5L10.5 10.5M10.5 0.5L0.5 10.5" stroke="#fff" stroke-width="1.1"/></svg>
<span class="tx" style="left:12px;top:42px;font-size:13px;color:#000;">Öğretim Elemanını Seçiniz</span>
<div style="left:13px;top:60px;width:345px;height:24px;background:#e5e5e5;border:1px solid #adadad"></div>
<span class="tx" style="left:17px;top:66px;font-size:13.2px;color:#000;">Öğr. Gör.&nbsp; Senem Sarıkaya</span>
<svg style="left:345px;top:70px" width="9" height="6"><path d="M0.5 0.5L4.5 4.5L8.5 0.5" fill="none" stroke="#404040" stroke-width="1.1"/></svg>
<div style="left:367px;top:55px;width:202px;height:33px;background:#e1e1e1;border:1px solid #adadad"></div>
<svg style="left:370px;top:59px" width="24" height="24" viewBox="0 0 24 24"><defs><linearGradient id="alg" x1="0" y1="0" x2="0" y2="1"><stop offset="0" stop-color="#a8dcff"/><stop offset="1" stop-color="#1a7ae0"/></linearGradient></defs><path d="M1 12L12 1V7H23V17H12V23Z" fill="url(#alg)" stroke="#1a6ad0" stroke-width="1"/></svg>
<span class="tx" style="left:409px;top:66px;font-size:13px;color:#000;">Seçili Dersi Gruptan Çıkar</span>
<div style="left:12px;top:92px;width:348px;height:356px;background:#fff;border:1px solid #828790"></div>
<div style="left:281px;top:93px;width:1px;height:24px;background:#e5e5e5"></div>
<span class="tx" style="left:20px;top:100px;font-size:13px;color:#000;">Dersler</span>
<div style="left:342px;top:93px;width:16px;height:354px;background:#f0f0f0"></div>
<div style="left:342px;top:111px;width:15px;height:310px;background:#cdcdcd"></div>
<svg style="left:345px;top:100px" width="9" height="6"><path d="M0.5 5L4.5 1L8.5 5" fill="none" stroke="#606060" stroke-width="1.5"/></svg>
<svg style="left:345px;top:434px" width="9" height="6"><path d="M0.5 1L4.5 5L8.5 1" fill="none" stroke="#606060" stroke-width="1.5"/></svg>
<div style="left:26px;top:121px;width:305px;height:14px;display:flex;align-items:center"><span class="tx" style="position:static;font-size:11.5px;color:#1a2e9e;padding-right:3px">Dış Ticaret 1</span><span style="position:static;flex:1;height:1px;background:#a9bbe0;margin-top:-1px"></span></div>
<span class="tx" style="left:20px;top:143px;font-size:13px;color:#000;">İşletme Yönetimi - II</span>
<div style="left:26px;top:166px;width:305px;height:14px;display:flex;align-items:center"><span class="tx" style="position:static;font-size:11.5px;color:#1a2e9e;padding-right:3px">Dış Ticaret 1 - İÖ</span><span style="position:static;flex:1;height:1px;background:#a9bbe0;margin-top:-1px"></span></div>
<span class="tx" style="left:20px;top:188px;font-size:13px;color:#000;">İşletme Yönetimi - II</span>
<div style="left:26px;top:211px;width:305px;height:14px;display:flex;align-items:center"><span class="tx" style="position:static;font-size:11.5px;color:#1a2e9e;padding-right:3px">Dış Ticaret 2</span><span style="position:static;flex:1;height:1px;background:#a9bbe0;margin-top:-1px"></span></div>
<span class="tx" style="left:20px;top:232px;font-size:13px;color:#000;">Uluslar Arası İktisat - II</span>
<span class="tx" style="left:20px;top:253px;font-size:13px;color:#000;">Meslek Etiği</span>
<div style="left:26px;top:277px;width:305px;height:14px;display:flex;align-items:center"><span class="tx" style="position:static;font-size:11.5px;color:#1a2e9e;padding-right:3px">Dış Ticaret 2 - İÖ</span><span style="position:static;flex:1;height:1px;background:#a9bbe0;margin-top:-1px"></span></div>
<span class="tx" style="left:20px;top:298px;font-size:13px;color:#000;">Uluslar Arası İktisat - II</span>
<span class="tx" style="left:20px;top:319px;font-size:13px;color:#000;">Meslek Etiği</span>
<div style="left:26px;top:343px;width:305px;height:14px;display:flex;align-items:center"><span class="tx" style="position:static;font-size:11.5px;color:#1a2e9e;padding-right:3px">Pazarlama 1</span><span style="position:static;flex:1;height:1px;background:#a9bbe0;margin-top:-1px"></span></div>
<div style="left:18px;top:361px;width:264px;height:20px;background:#0078d7"></div>
<span class="tx" style="left:20px;top:364px;font-size:13px;color:#fff;">İşletme Yönetimi - II</span>
<div style="left:26px;top:388px;width:305px;height:14px;display:flex;align-items:center"><span class="tx" style="position:static;font-size:11.5px;color:#1a2e9e;padding-right:3px">Pazarlama 2</span><span style="position:static;flex:1;height:1px;background:#a9bbe0;margin-top:-1px"></span></div>
<span class="tx" style="left:20px;top:409px;font-size:13px;color:#000;">Meslek Etiği</span>
<div style="left:366px;top:92px;width:348px;height:355px;background:#fff;border:1px solid #828790"></div>
<div style="left:668px;top:93px;width:1px;height:24px;background:#e5e5e5"></div>
<span class="tx" style="left:374px;top:99px;font-size:13px;color:#000;">Ortak Ders Adı ve Sınıfı</span>
<div style="left:380px;top:120px;width:322px;height:14px;display:flex;align-items:center"><span class="tx" style="position:static;font-size:11.5px;color:#1a2e9e;padding-right:3px">Ortak Dersler</span><span style="position:static;flex:1;height:1px;background:#a9bbe0;margin-top:-1px"></span></div>
<span class="tx" style="left:374px;top:142px;font-size:13px;color:#000;">İşletme Yönetimi - II (Dış Ticaret 1)</span>
<span class="tx" style="left:374px;top:163px;font-size:13px;color:#000;">İşletme Yönetimi - II (Dış Ticaret 1 - İÖ)</span>
<span class="tx" style="left:374px;top:184px;font-size:13px;color:#000;">İşletme Yönetimi - II (Pazarlama 1)</span>
<div style="left:380px;top:207px;width:322px;height:14px;display:flex;align-items:center"><span class="tx" style="position:static;font-size:11.5px;color:#1a2e9e;padding-right:3px">Ortak Dersler</span><span style="position:static;flex:1;height:1px;background:#a9bbe0;margin-top:-1px"></span></div>
<span class="tx" style="left:374px;top:229px;font-size:13px;color:#000;">Uluslar Arası İktisat - II (Dış Ticaret 2)</span>
<span class="tx" style="left:374px;top:250px;font-size:13px;color:#000;">Uluslar Arası İktisat - II (Dış Ticaret 2 - İÖ)</span>
<span class="tx" style="left:15px;top:453px;font-size:10.7px;color:#a3a3a3;letter-spacing:-0.15px">Dersleri gruplandırmak için sol taraftaki dersleri tıklayarak sağ taraftaki kutucuğa sürükleyiniz.</span>
<span class="tx" style="left:15px;top:466px;font-size:10.7px;color:#a3a3a3;letter-spacing:-0.15px">Boşluğa bırakırsanız yeni grup oluşur. Gruptaki bir dersin üzerine bırakırsanız, gruba eklenir.</span>
<div style="left:618px;top:455px;width:95px;height:40px;background:#e1e1e1;border:1px solid #adadad"></div>
<svg style="position:absolute;left:621px;top:467px" width="25" height="21" viewBox="0 0 25 21"><defs><linearGradient id="ckg" x1="0" y1="0" x2="1" y2="1"><stop offset="0" stop-color="#8af060"/><stop offset="1" stop-color="#20a820"/></linearGradient></defs><path d="M3 13L8.5 18.5L21.5 5" fill="none" stroke="#1a9a1a" stroke-width="4.6" stroke-linecap="round" stroke-linejoin="round"/><path d="M3 13L8.5 18.5L21.5 5" fill="none" stroke="url(#ckg)" stroke-width="3.2" stroke-linecap="round" stroke-linejoin="round"/><path d="M4 12.5L8.5 17M11 15L21 4.8" fill="none" stroke="#c8ffb0" stroke-width="0.8" stroke-linecap="round"/></svg>
<span class="tx" style="left:654px;top:468px;font-size:14.5px;color:#000;font-weight:bold;letter-spacing:0.4px">Tamam</span>
</div>
<div style="left:0;top:0;width:1297px;height:2px;background:#1f1f3d;z-index:99"></div>
<div style="left:0;top:0;width:2px;height:879px;background:linear-gradient(#1f1f3d 0,#2c2844 160px,#4a3a48 300px,#6a4a40 420px,#a07038 490px,#6a4a40 560px,#3c2c34 760px,#1f1f2d 879px);z-index:99"></div>
<div style="left:1295px;top:0;width:2px;height:879px;background:#1f1f3d;z-index:99"></div>
<div style="left:0;top:877px;width:1297px;height:2px;background:#1f1f3d;z-index:99"></div>
</body></html>
